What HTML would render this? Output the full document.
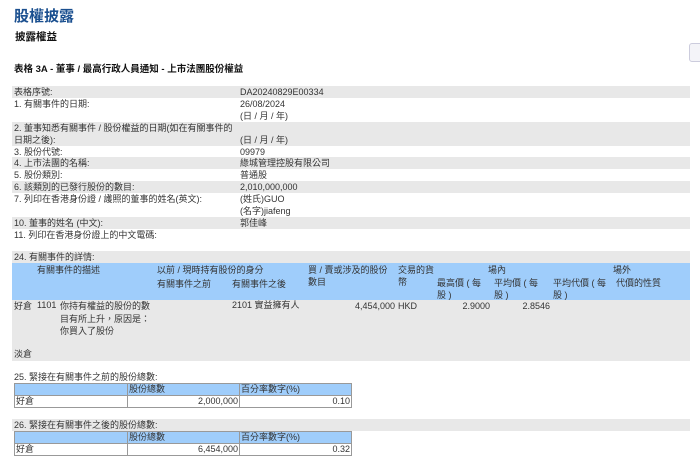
<!DOCTYPE html>
<html><head><meta charset="utf-8"><style>
body{margin:0;width:700px;height:461px;background:#fff;position:relative;overflow:hidden;font-family:"Liberation Sans","Noto Sans CJK TC",sans-serif;font-size:9px;color:#333}
.a{position:absolute;white-space:nowrap;line-height:12px}
.g{position:absolute;background:#e8e8e8;left:12px;width:678px}
.b{position:absolute;background:#9fcdfb}
table{position:absolute;border-collapse:collapse;left:14px;width:338px;font-size:9px}
td{border:1px solid #999;height:11px;padding:0 1px;line-height:11px}
.r{text-align:right}
</style></head><body>
<div class="a" style="left:14px;top:8px;font-size:15px;line-height:18px;font-weight:bold;color:#1a4f8f">股權披露</div>
<div class="a" style="left:15px;top:31px;font-size:10.5px;font-weight:bold;color:#111">披露權益</div>
<div style="position:absolute;left:689px;top:43px;width:14px;height:17px;border:1px solid #ccd;border-radius:3px;background:#f4f4f8"></div>
<div class="a" style="left:14px;top:64px;font-size:9.5px;color:#111;font-weight:bold">表格 3A - 董事 / 最高行政人員通知 - 上市法團股份權益</div>

<div class="g" style="top:86px;height:12px"></div>
<div class="g" style="top:122px;height:24px"></div>
<div class="g" style="top:157px;height:12px"></div>
<div class="g" style="top:181px;height:12px"></div>
<div class="g" style="top:217px;height:12px"></div>

<div class="a" style="left:14px;top:86px">表格序號:</div><div class="a" style="left:240px;top:86px">DA20240829E00334</div>
<div class="a" style="left:14px;top:98px">1. 有關事件的日期:</div><div class="a" style="left:240px;top:98px">26/08/2024<br>(日 / 月 / 年)</div>
<div class="a" style="left:14px;top:122px">2. 董事知悉有關事件 / 股份權益的日期(如在有關事件的<br>日期之後):</div><div class="a" style="left:240px;top:134px">(日 / 月 / 年)</div>
<div class="a" style="left:14px;top:146px">3. 股份代號:</div><div class="a" style="left:240px;top:146px">09979</div>
<div class="a" style="left:14px;top:157px">4. 上市法團的名稱:</div><div class="a" style="left:240px;top:157px">綠城管理控股有限公司</div>
<div class="a" style="left:14px;top:169px">5. 股份類別:</div><div class="a" style="left:240px;top:169px">普通股</div>
<div class="a" style="left:14px;top:181px">6. 該類別的已發行股份的數目:</div><div class="a" style="left:240px;top:181px">2,010,000,000</div>
<div class="a" style="left:14px;top:193px">7. 列印在香港身份證 / 護照的董事的姓名(英文):</div><div class="a" style="left:240px;top:193px">(姓氏)GUO<br>(名字)jiafeng</div>
<div class="a" style="left:14px;top:217px">10. 董事的姓名 (中文):</div><div class="a" style="left:240px;top:217px">郭佳峰</div>
<div class="a" style="left:14px;top:229px">11. 列印在香港身份證上的中文電碼:</div>

<div class="g" style="top:251px;height:110px"></div>
<div class="b" style="left:12px;top:263px;width:678px;height:37px"></div>
<div class="a" style="left:14px;top:251px">24. 有關事件的詳情:</div>
<div class="a" style="left:37px;top:264px">有關事件的描述</div>
<div class="a" style="left:157px;top:264px">以前 / 現時持有股份的身分</div>
<div class="a" style="left:157px;top:278px">有關事件之前</div>
<div class="a" style="left:232px;top:278px">有關事件之後</div>
<div class="a" style="left:308px;top:264px">買 / 賣或涉及的股份<br>數目</div>
<div class="a" style="left:398px;top:264px">交易的貨<br>幣</div>
<div class="a" style="left:488px;top:264px">場內</div>
<div class="a" style="left:437px;top:277px">最高價 ( 每<br>股 )</div>
<div class="a" style="left:494px;top:277px">平均價 ( 每<br>股 )</div>
<div class="a" style="left:553px;top:277px">平均代價 ( 每<br>股 )</div>
<div class="a" style="left:613px;top:264px">場外</div>
<div class="a" style="left:616px;top:277px">代價的性質</div>
<div class="a" style="left:14px;top:300px">好倉</div>
<div class="a" style="left:37px;top:299px">1101</div>
<div class="a" style="left:60px;top:300px;line-height:12.5px">你持有權益的股份的數<br>目有所上升，原因是：<br>你買入了股份</div>
<div class="a" style="left:232px;top:299px">2101 實益擁有人</div>
<div class="a" style="left:336px;top:300px;width:59px;text-align:right">4,454,000</div>
<div class="a" style="left:398px;top:300px">HKD</div>
<div class="a" style="left:440px;top:300px;width:50px;text-align:right">2.9000</div>
<div class="a" style="left:500px;top:300px;width:50px;text-align:right">2.8546</div>
<div class="a" style="left:14px;top:348px">淡倉</div>

<div class="a" style="left:14px;top:371px">25. 緊接在有關事件之前的股份總數:</div>
<table style="top:383px"><tr style="background:#9fcdfb"><td style="width:110px"></td><td style="width:109px">股份總數</td><td>百分率數字(%)</td></tr>
<tr><td>好倉</td><td class="r">2,000,000</td><td class="r">0.10</td></tr></table>

<div class="g" style="top:419px;height:12px"></div>
<div class="a" style="left:14px;top:419px">26. 緊接在有關事件之後的股份總數:</div>
<table style="top:431px"><tr style="background:#9fcdfb"><td style="width:110px"></td><td style="width:109px">股份總數</td><td>百分率數字(%)</td></tr>
<tr><td>好倉</td><td class="r">6,454,000</td><td class="r">0.32</td></tr></table>
</body></html>
